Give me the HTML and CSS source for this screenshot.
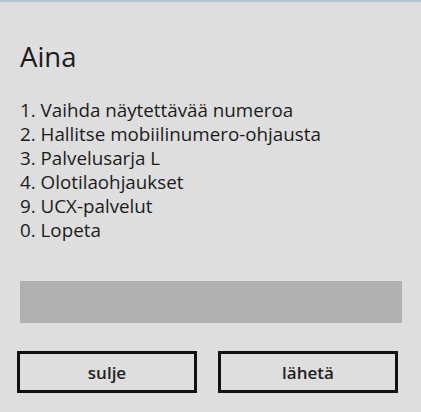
FILE: index.html
```html
<!DOCTYPE html>
<html lang="fi">
<head>
  <meta charset="UTF-8">
  <meta name="viewport" content="width=device-width, initial-scale=1.0">
  <title>Aina</title>
  <link rel="stylesheet" href="styles.css">
</head>
<body>
  <div class="dialog">
    <h1 class="title">Aina</h1>
    <div class="menu">
      <p>1. Vaihda näytettävää numeroa</p>
      <p>2. Hallitse mobiilinumero-ohjausta</p>
      <p>3. Palvelusarja L</p>
      <p>4. Olotilaohjaukset</p>
      <p>9. UCX-palvelut</p>
      <p>0. Lopeta</p>
    </div>
    <input class="answer" type="text">
    <div class="actions">
      <button class="btn">sulje</button>
      <button class="btn">lähetä</button>
    </div>
  </div>
</body>
</html>
```

FILE: styles.css
```css
body {
  margin: 0;
  height: 412px;
  box-sizing: border-box;
  background-color: #dedede;
  border-top: 2px solid #b8c3ce;
  color: #1b1b1b;
  font-family: 'Open Sans', 'Noto Sans', sans-serif;
  overflow: hidden;
}
.dialog {
  padding: 0 19px 0 20px;
}
.title {
  font-size: 27.5px;
  font-weight: 500;
  line-height: 36px;
  margin: 37px 0 0 0;
}
.menu {
  margin-top: 23px;
  font-size: 18.8px;
  line-height: 24px;
}
.menu p {
  margin: 0;
}
.answer {
  display: block;
  width: 100%;
  height: 42px;
  margin-top: 39px;
  box-sizing: border-box;
  border: none;
  background-color: #b0b0b0;
  outline: none;
}
.actions {
  display: flex;
  gap: 21px;
  margin: 28px 0 0 -3px;
}
.btn {
  width: 180px;
  height: 42px;
  box-sizing: border-box;
  border: 3px solid #111;
  background: transparent;
  color: #222;
  font-family: 'Open Sans', 'Noto Sans', sans-serif;
  font-size: 17px;
  font-weight: 600;
  padding: 0;
  cursor: pointer;
}
```
